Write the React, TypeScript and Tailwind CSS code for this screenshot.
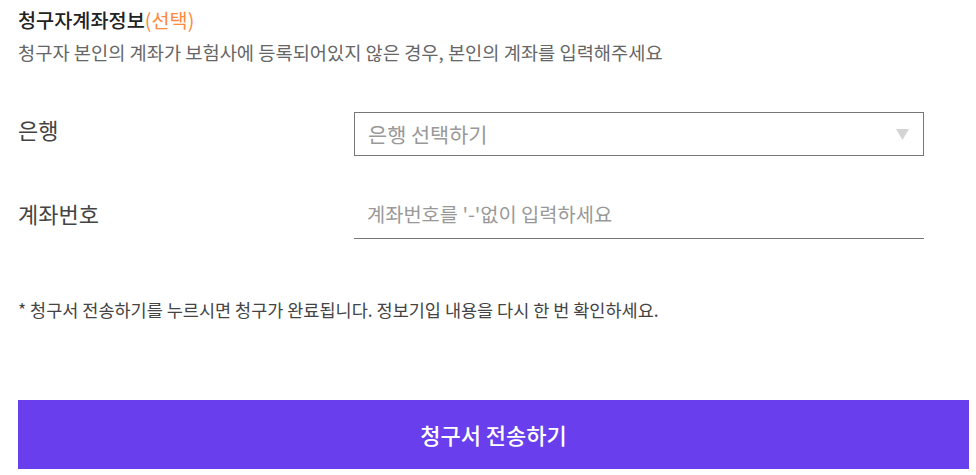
import React from 'react';

const font = { fontFamily: '"Noto Sans CJK KR", "Noto Sans", sans-serif' };

export default function App() {
  return (
    <div className="w-[976px] h-[475px] bg-white text-[#333] overflow-hidden" style={font}>
      <div className="pl-[18px] pr-[7px] pt-[6px]">
        {/* Title */}
        <h2 className="text-[19.7px] font-medium leading-[28px] text-[#222]">
          청구자계좌정보<span className="text-[#ff8a3d] font-normal">(선택)</span>
        </h2>
        <p className="mt-[4px] text-[18.7px] leading-[28px] text-[#666]">
          청구자 본인의 계좌가 보험사에 등록되어있지 않은 경우, 본인의 계좌를 입력해주세요
        </p>

        {/* Bank */}
        <div className="mt-[46px] flex items-center">
          <label className="w-[336px] text-[22px] leading-[30px] text-[#444] -mt-[10px]">은행</label>
          <div className="w-[570px] h-[44px] border border-[#777] flex items-center justify-between pl-[13px] pr-[14px]">
            <span className="text-[20.8px] leading-[30px] text-[#999]">은행 선택하기</span>
            <svg width="13" height="11" viewBox="0 0 13 11">
              <polygon points="0,0 13,0 6.5,11" fill="#d4d4d4" />
            </svg>
          </div>
        </div>

        {/* Account number */}
        <div className="mt-[37px] flex items-start">
          <label className="w-[336px] text-[22px] leading-[30px] text-[#444] pt-[5px]">계좌번호</label>
          <div className="w-[570px] h-[46px] border-b border-[#777] flex items-center pl-[13px] pb-[4px]">
            <span className="text-[19.8px] leading-[30px] text-[#999]">계좌번호를 '-'없이 입력하세요</span>
          </div>
        </div>

        {/* Note */}
        <p className="mt-[57px] text-[17.5px] leading-[28px] text-[#444]">
          * 청구서 전송하기를 누르시면 청구가 완료됩니다. 정보기입 내용을 다시 한 번 확인하세요.
        </p>

        {/* Submit */}
        <button className="mt-[76px] w-[951px] h-[69px] bg-[#693eec] text-white text-[22px] font-medium flex items-center justify-center">
          청구서 전송하기
        </button>
      </div>
    </div>
  );
}
